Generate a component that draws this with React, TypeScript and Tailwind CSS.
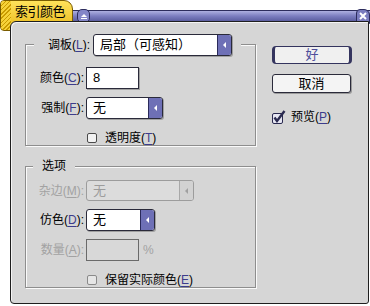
import clsx from "clsx";

const ACC = "text-[#3c3c8c] underline underline-offset-2";

function Label({ text, k, disabled }: { text: string; k: string; disabled?: boolean }) {
  return (
    <span className={clsx("whitespace-nowrap", disabled ? "text-[#a2a2a2]" : "text-black")}>
      {text}(<span className={clsx("underline underline-offset-2", !disabled && "text-[#3c3c8c]")}>{k}</span>)
    </span>
  );
}

function Dropdown({ value, className, disabled }: { value: string; className: string; disabled?: boolean }) {
  return (
    <div
      className={clsx(
        "flex rounded-[3px] border",
        disabled
          ? "border-[#9c9c9c] bg-[#dcdcdc] text-[#9c9c9c]"
          : "border-[#2a2a3a] bg-white text-black shadow-[1px_1px_0_#a0a0a0]",
        className
      )}
    >
      <div className="flex flex-1 items-center pl-[6px] text-[13px] whitespace-nowrap">{value}</div>
      <div
        className={clsx(
          "flex w-[14px] items-center justify-center rounded-r-[2px] border-l",
          disabled ? "border-[#a8a8a8] bg-[#d2d2d2]" : "border-[#2a2a5a] bg-[#6e70b6]"
        )}
      >
        <span
          className={clsx(
            "h-0 w-0 border-y-[3px] border-r-[3px] border-y-transparent",
            disabled ? "border-r-[#a0a0a0]" : "border-r-white"
          )}
        />
      </div>
    </div>
  );
}

function Check() {
  return <span className="h-[10px] w-[10px] rounded-[2px] border border-[#4a4a4a] bg-[#f2f2f2]" />;
}

export default function App() {
  return (
    <div className="relative h-[306px] w-[370px] overflow-hidden bg-white font-['Liberation_Sans','Noto_Sans_CJK_SC',sans-serif] text-[12px] text-black">
      {/* Yellow name tab */}
      <div className="absolute left-0 top-0 flex h-[31px] w-[73px] overflow-hidden rounded-tl-[4px] rounded-tr-[9px] rounded-bl-[4px] border border-[#7a5c00] bg-gradient-to-b from-[#ffe35a] to-[#e8b800]">
        <div className="w-[10px] bg-[repeating-linear-gradient(135deg,#c99a00_0px,#c99a00_1px,#f6d23a_1px,#f6d23a_3px)]" />
        <div className="flex h-[22px] items-center pl-[4px] text-[13px] tracking-[-0.5px] text-black">索引颜色</div>
      </div>

      {/* Title bar */}
      <div className="ml-[72px] mt-[10px] flex h-[12px] items-center border-y border-[#2c2c5c] bg-gradient-to-b from-[#aeb0e0] via-[#7c7ec0] to-[#5c5ea0]">
        <div className="ml-[5px] flex h-[14px] w-[13px] flex-col items-center justify-center gap-[1px] rounded-[5px] border border-[#2c2c5c] bg-[#8486c8]">
          <span className="h-0 w-0 border-x-[3px] border-b-[3px] border-x-transparent border-b-white" />
          <span className="h-[1px] w-[6px] bg-white" />
        </div>
        <div className="ml-auto flex h-[15px] w-[14px] items-center justify-center rounded-tl-[4px] rounded-tr-[6px] border border-[#2c2c5c] bg-[#7a7cbe]">
          <svg width="8" height="8" viewBox="0 0 8 8">
            <path d="M1 1 L7 7 M7 1 L1 7" stroke="white" strokeWidth="2" />
          </svg>
        </div>
      </div>

      {/* Body */}
      <div className="relative z-10 -mt-[1px] ml-[10px] flex h-[283px] w-[359px] rounded-tl-[6px] rounded-bl-[4px] rounded-br-[3px] border border-[#1e1e1e] bg-[#d6d6d6] shadow-[inset_1px_1px_0_#f4f4f4]">
        {/* Left column */}
        <div className="ml-[14px] mt-[22px] flex w-[231px] flex-col">
          {/* Group 1 */}
          <div className="h-[102px] border border-[#8e8e8e] shadow-[inset_1px_1px_0_#fafafa,1px_1px_0_#fafafa]">
            <div className="-mt-[11px] ml-[8px] flex h-[22px] w-fit items-center bg-[#d6d6d6] pl-[14px] pr-[9px]">
              <span className="mr-[3px]">
                <Label text="调板" k="L" />:
              </span>
              <Dropdown value="局部（可感知）" className="h-[22px] w-[139px]" />
            </div>
            <div className="mt-[11px] flex h-[22px] items-center">
              <div className="w-[58px] text-right">
                <Label text="颜色" k="C" />:
              </div>
              <div className="ml-[2px] flex h-[22px] w-[53px] items-center border border-[#2a2a3a] bg-white pl-[6px] text-[13px] shadow-[1px_1px_0_#a0a0a0]">
                8
              </div>
            </div>
            <div className="mt-[8px] flex h-[22px] items-center">
              <div className="w-[58px] text-right">
                <Label text="强制" k="F" />:
              </div>
              <Dropdown value="无" className="ml-[2px] h-[22px] w-[77px]" />
            </div>
            <div className="mt-[10px] flex items-center pl-[61px]">
              <Check />
              <span className="ml-[8px]">
                <Label text="透明度" k="T" />
              </span>
            </div>
          </div>

          {/* Group 2 */}
          <div className="mt-[20px] h-[122px] border border-[#8e8e8e] shadow-[inset_1px_1px_0_#fafafa,1px_1px_0_#fafafa]">
            <div className="-mt-[9px] ml-[7px] flex h-[16px] w-fit items-center bg-[#d6d6d6] px-[9px]">选项</div>
            <div className="mt-[6px] flex h-[21px] items-center">
              <div className="w-[58px] text-right text-[#a2a2a2]">
                <Label text="杂边" k="M" disabled />:
              </div>
              <Dropdown value="无" className="ml-[2px] h-[21px] w-[108px]" disabled />
            </div>
            <div className="mt-[8px] flex h-[22px] items-center">
              <div className="w-[58px] text-right">
                <Label text="仿色" k="D" />:
              </div>
              <Dropdown value="无" className="ml-[2px] h-[22px] w-[69px]" />
            </div>
            <div className="mt-[8px] flex h-[22px] items-center">
              <div className="w-[58px] text-right text-[#a2a2a2]">
                <Label text="数量" k="A" disabled />:
              </div>
              <div className="ml-[2px] h-[22px] w-[53px] border border-[#6a6a6a] bg-[#d8d8d8]" />
              <span className="ml-[4px] text-[#a2a2a2]">%</span>
            </div>
            <div className="mt-[10px] flex items-center pl-[61px]">
              <span className="h-[10px] w-[10px] rounded-[2px] border border-[#8a8a8a] bg-[#e6e6e6]" />
              <span className="ml-[8px]">
                <Label text="保留实际颜色" k="E" />
              </span>
            </div>
          </div>
        </div>

        {/* Right column */}
        <div className="ml-[16px] mt-[24px] flex w-[80px] flex-col">
          <div className="flex h-[18px] w-[80px] items-center justify-center rounded-[4px] border-x-[3px] border-y border-[#34345e] bg-[#f0f0f0] text-[13px] text-[#4e4e9a]">
            好
          </div>
          <div className="mt-[10px] flex h-[19px] w-[79px] items-center justify-center rounded-[3px] border border-[#2a2a3a] bg-[#f4f4f4] text-[13px] shadow-[1px_1px_0_#9a9a9a]">
            取消
          </div>
          <div className="mt-[15px] flex items-center">
            <svg width="14" height="14" viewBox="0 0 14 14">
              <rect x="0.5" y="3.5" width="10" height="10" rx="1.5" fill="#e6e6f2" stroke="#2a2a50" />
              <path d="M2.5 7.5 L5 11 L12.5 1" fill="none" stroke="#2a2a50" strokeWidth="2.4" />
            </svg>
            <span className="ml-[5px]">
              预览(<span className={ACC}>P</span>)
            </span>
          </div>
        </div>
      </div>
    </div>
  );
}
